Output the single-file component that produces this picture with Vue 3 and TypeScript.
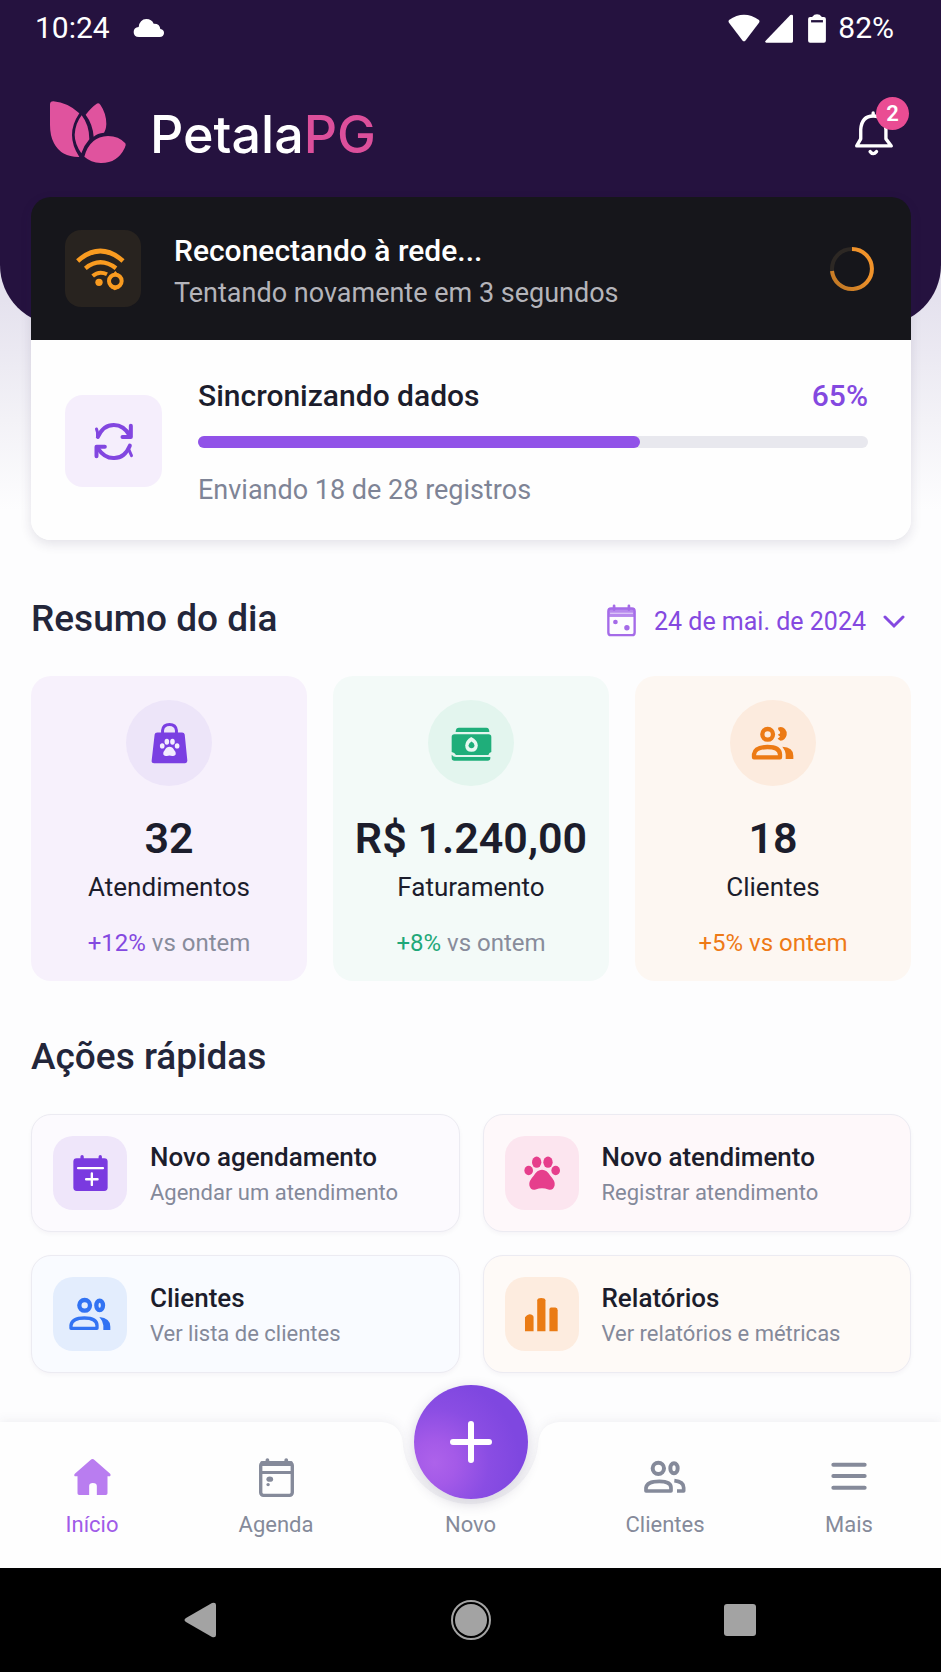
<script setup lang="ts">
interface Stat {
  tone: string
  icon: string
  value: string
  label: string
  delta: string
}

interface QuickAction {
  tone: string
  icon: string
  title: string
  text: string
}

interface Tab {
  icon: string
  label: string
  active?: boolean
}

const sent = 18
const total = 28
const progress = 65
const barStyle = { width: '66%' }

const stats: Stat[] = [
  { tone: 'violet', icon: 'bag', value: '32', label: 'Atendimentos', delta: '+12%' },
  { tone: 'green', icon: 'money', value: 'R$ 1.240,00', label: 'Faturamento', delta: '+8%' },
  { tone: 'orange', icon: 'people-bold', value: '18', label: 'Clientes', delta: '+5%' },
]

const actions: QuickAction[] = [
  { tone: 'violet', icon: 'calendar-plus', title: 'Novo agendamento', text: 'Agendar um atendimento' },
  { tone: 'pink', icon: 'paw', title: 'Novo atendimento', text: 'Registrar atendimento' },
  { tone: 'blue', icon: 'people', title: 'Clientes', text: 'Ver lista de clientes' },
  { tone: 'orange', icon: 'bars', title: 'Relatórios', text: 'Ver relatórios e métricas' },
]

const tabsLeft: Tab[] = [
  { icon: 'home', label: 'Início', active: true },
  { icon: 'agenda', label: 'Agenda' },
]

const tabsRight: Tab[] = [
  { icon: 'people-thin', label: 'Clientes' },
  { icon: 'menu', label: 'Mais' },
]
</script>

<template>
  <div class="app">
    <svg class="sprite" aria-hidden="true">
      <symbol id="i-bag" viewBox="0 0 118 132">
        <path d="M38 36V28Q40 10 59 10Q78 10 80 28V36" fill="none" stroke="currentColor" stroke-width="9" />
        <path d="M14 40Q15 34 22 34H97Q104 34 105 40L113 120Q113 127 106 127H12Q4 127 5 120Z" fill="currentColor" />
        <g fill="#f3edff">
          <ellipse cx="37" cy="75" rx="7" ry="8" />
          <ellipse cx="51" cy="62" rx="7" ry="9" />
          <ellipse cx="68" cy="62" rx="7" ry="9" />
          <ellipse cx="82" cy="75" rx="7" ry="8" />
          <path d="M59 77Q68 77 73 87Q80 94 78 100Q75 107 67 105Q59 103 51 105Q43 107 40 100Q38 94 45 87Q50 77 59 77Z" />
        </g>
      </symbol>
      <symbol id="i-money" viewBox="0 0 130 112">
        <path d="M17 21Q17 8 27 8H110Q119 8 119 21Z" fill="currentColor" />
        <path d="M5 36Q5 28 13 28H117Q125 28 125 36V82Q118 84 116 91H18Q14 84 5 82Z" fill="currentColor" />
        <path d="M5 90Q10 97 18 97H122V101Q122 108 114 108H13Q5 108 5 100Z" fill="currentColor" />
        <path d="M64 36Q84 46 84 62Q83 81 65 81Q46 81 46 62Q47 46 64 36Z" fill="#e9f8f1" />
        <path d="M65 50Q74 54 74 62Q73 70 65 70Q57 70 56 62Q57 54 65 50Z" fill="currentColor" />
      </symbol>
      <symbol id="i-people-bold" viewBox="0 0 132 108">
        <circle cx="50" cy="28" r="16" fill="none" stroke="currentColor" stroke-width="13" />
        <path d="M81 8Q93 2 102 12Q109 20 107 30Q103 46 89 47Q82 46 80 40Q85 40 87 34Q82 34 81 28Q89 26 87 20Q81 18 81 8Z" fill="currentColor" />
        <path d="M9 97V88Q12 66 49 66Q86 66 87 88V97Z" fill="none" stroke="currentColor" stroke-width="13" stroke-linejoin="round" />
        <path d="M94 65Q127 66 127 92V102H104V88Q103 76 94 65Z" fill="currentColor" />
      </symbol>
      <symbol id="i-people" viewBox="0 0 132 108">
        <circle cx="50" cy="28" r="16" fill="none" stroke="currentColor" stroke-width="13" />
        <ellipse cx="95" cy="28" rx="10" ry="14" fill="none" stroke="currentColor" stroke-width="13" />
        <path d="M9 97V88Q12 66 49 66Q86 66 87 88V97Z" fill="none" stroke="currentColor" stroke-width="10" stroke-linejoin="round" />
        <path d="M94 63Q127 66 127 92V102H106V88Q104 74 94 63Z" fill="currentColor" />
      </symbol>
      <symbol id="i-people-thin" viewBox="0 0 132 108">
        <circle cx="46" cy="28" r="17" fill="none" stroke="currentColor" stroke-width="12" />
        <ellipse cx="93" cy="28" rx="11" ry="15" fill="none" stroke="currentColor" stroke-width="12" />
        <path d="M9 96V86Q12 67 49 67Q84 67 84 86V96Z" fill="none" stroke="currentColor" stroke-width="11" stroke-linejoin="round" />
        <path d="M94 65Q122 68 122 86V96H102" fill="none" stroke="currentColor" stroke-width="11" stroke-linejoin="round" />
      </symbol>
      <symbol id="i-calendar" viewBox="0 0 92 100">
        <rect x="7" y="13" width="78" height="79" rx="8" fill="none" stroke="currentColor" stroke-width="7" />
        <path d="M7 12H85V38H7Z" fill="currentColor" opacity=".8" />
        <path d="M12 27H80" stroke="#e6d6fb" stroke-width="3" />
        <path d="M24 5V16M68 5V16" stroke="currentColor" stroke-width="8" stroke-linecap="round" />
        <circle cx="28" cy="53" r="7" fill="currentColor" />
        <circle cx="62" cy="70" r="8" fill="currentColor" />
      </symbol>
      <symbol id="i-calendar-plus" viewBox="0 0 110 116">
        <rect x="4" y="13" width="102" height="97" rx="10" fill="currentColor" />
        <path d="M30 8V18M84 8V18" stroke="currentColor" stroke-width="10" stroke-linecap="round" />
        <path d="M18 42H92" stroke="#fff" stroke-width="7" stroke-linecap="round" />
        <path d="M42 75H76M59 58V92" stroke="#fff" stroke-width="7" stroke-linecap="round" />
      </symbol>
      <symbol id="i-paw" viewBox="0 0 114 110">
        <g fill="currentColor">
          <ellipse cx="17" cy="46" rx="13" ry="14" />
          <ellipse cx="41" cy="21" rx="14" ry="17" />
          <ellipse cx="75" cy="21" rx="14" ry="17" />
          <ellipse cx="98" cy="46" rx="13" ry="14" />
          <path d="M57 44Q72 44 82 62Q97 78 95 90Q91 107 76 103Q57 96 38 103Q23 107 19 90Q17 78 32 62Q42 44 57 44Z" />
        </g>
      </symbol>
      <symbol id="i-bars" viewBox="0 0 106 110">
        <g fill="currentColor">
          <path d="M3 63Q9 55 16 54Q29 55 29 63V106H3Z" />
          <path d="M40 12Q41 5 52 5Q64 5 65 12V106H40Z" />
          <path d="M77 40Q77 34 82 34H95Q102 35 102 42V106H77Z" />
        </g>
      </symbol>
      <symbol id="i-home" viewBox="0 0 116 114">
        <path d="M52 6Q58 0 64 6L111 47Q115 54 107 55H103V106Q103 111 98 111H71V84Q71 75 59 75Q48 75 48 84V111H18Q13 111 13 106V55H8Q0 54 5 47Z" fill="currentColor" />
      </symbol>
      <symbol id="i-agenda" viewBox="0 0 110 122">
        <rect x="8" y="17" width="94" height="97" rx="8" fill="none" stroke="currentColor" stroke-width="10" />
        <path d="M8 20H102" stroke="currentColor" stroke-width="14" />
        <path d="M8 46H102" stroke="currentColor" stroke-width="9" />
        <path d="M28 9V18M84 9V18" stroke="currentColor" stroke-width="11" stroke-linecap="round" />
        <ellipse cx="35" cy="66" rx="10" ry="8" fill="currentColor" />
        <circle cx="30" cy="82" r="5" fill="currentColor" />
      </symbol>
      <symbol id="i-menu" viewBox="0 0 108 90">
        <path d="M7 8H101M7 42H101M7 77H101" stroke="currentColor" stroke-width="12" stroke-linecap="round" />
      </symbol>
    </svg>

    <div class="hero">
      <header class="header">
        <div class="status">
          <span class="clock">10:24</span>
          <svg class="cloud" viewBox="0 0 96 60" aria-hidden="true">
            <path d="M18 57Q2 57 2 42Q2 28 17 27Q20 4 40 3Q56 3 62 17Q80 16 82 33Q94 35 93 46Q92 57 80 57Z" fill="#fff" />
          </svg>
          <svg class="wifi" viewBox="0 0 96 84" aria-hidden="true">
            <path d="M3 18Q48 -14 93 18Q96 22 93 26L52 80Q48 84 44 80L3 26Q0 22 3 18Z" fill="#fff" />
          </svg>
          <svg class="signal" viewBox="0 0 84 87" aria-hidden="true">
            <path d="M76 3Q84 0 84 6V82Q84 86 80 86H4Q-2 85 2 80Z" fill="#fff" />
          </svg>
          <svg class="battery" viewBox="0 0 54 88" aria-hidden="true">
            <path d="M12 9L19 2Q27 -1 35 2L42 9H48Q54 9 54 15V81Q54 87 48 87H6Q0 87 0 81V15Q0 9 6 9Z" fill="#fff" />
            <path d="M9 22H45" stroke="#24123f" stroke-width="7" />
          </svg>
          <span class="charge">82%</span>
        </div>
        <div class="brand-row">
          <svg class="logo" viewBox="0 0 240 195" aria-hidden="true">
            <g fill="#e0539e">
              <path d="M6 14Q6 4 16 4Q60 8 94 40Q50 105 94 171Q40 172 18 130Q6 108 6 75Z" />
              <path d="M113 44Q130 22 146 11Q152 8 157 14Q175 40 175 72Q174 90 168 98Q148 100 137 110Q134 72 113 44Z" />
              <path d="M101 46Q124 75 124 118Q108 136 100 160Q80 130 80 104Q82 70 101 46Z" />
              <path d="M109 170Q125 110 180 108Q212 108 232 130Q236 136 230 144Q208 190 158 189Q128 187 109 170Z" />
            </g>
          </svg>
          <span class="wordmark">Petala<b>PG</b></span>
          <button class="bell" type="button" aria-label="Notificações">
            <svg viewBox="0 0 125 140" aria-hidden="true">
              <g fill="none" stroke="#fff" stroke-width="10" stroke-linejoin="round" stroke-linecap="round">
                <path d="M11 107L23 86V58Q26 18 60 18Q94 18 98 58V86L114 107Z" />
                <path d="M60 16V9" />
                <path d="M51 124Q60 136 70 124" />
              </g>
            </svg>
            <span class="badge">2</span>
          </button>
        </div>
      </header>

      <section class="sync-card">
        <div class="offline" role="status">
          <span class="offline-icon">
            <svg viewBox="8 0 150 132" aria-hidden="true">
              <g fill="none" stroke="#f99b20" stroke-width="14">
                <path d="M7 42Q75 -18 143 42" />
                <path d="M30 64Q75 28 122 64" stroke-width="13" />
                <path d="M52 87Q71 70 95 82" stroke-width="12" />
                <circle cx="120" cy="102" r="19" stroke-width="12" />
              </g>
              <path d="M112 82L120 72L129 82ZM104 122L118 130L134 124Z" fill="#f99b20" />
              <circle cx="71" cy="106" r="11" fill="#f99b20" />
            </svg>
          </span>
          <div class="offline-text">
            <strong>Reconectando à rede...</strong>
            <span>Tentando novamente em 3 segundos</span>
          </div>
          <svg class="spinner" viewBox="0 0 46 46" aria-hidden="true">
            <defs>
              <linearGradient id="spin" x1="0" y1="1" x2="1" y2="0">
                <stop offset="0" stop-color="#b87324" />
                <stop offset=".6" stop-color="#f0922a" />
              </linearGradient>
            </defs>
            <circle cx="23" cy="23" r="20" fill="none" stroke="#2d2824" stroke-width="4" />
            <path d="M23 3A20 20 0 1 1 3 25" fill="none" stroke="url(#spin)" stroke-width="4" />
          </svg>
        </div>
        <div class="sync">
          <span class="sync-icon">
            <svg viewBox="0 0 125 120" aria-hidden="true">
              <g fill="none" stroke="#8246e0" stroke-width="12" stroke-linecap="round" stroke-linejoin="round">
                <path d="M14 48Q30 12 62 12Q92 12 110 44" />
                <path d="M10 24L13 34V46" stroke-width="9" />
                <path d="M113 14V48H88" />
                <path d="M110 74Q94 112 62 111Q34 112 14 82" />
                <path d="M108 88L115 104" stroke-width="9" />
                <path d="M10 106V77H35" />
              </g>
            </svg>
          </span>
          <div class="sync-body">
            <div class="sync-head">
              <strong>Sincronizando dados</strong>
              <span>{{ progress }}%</span>
            </div>
            <div class="track" role="progressbar" aria-label="Sincronizando dados" :aria-valuenow="progress" aria-valuemin="0" aria-valuemax="100">
              <div class="fill" :style="barStyle"></div>
            </div>
            <p>Enviando {{ sent }} de {{ total }} registros</p>
          </div>
        </div>
      </section>
    </div>

    <main class="main">
      <div class="section-head">
        <h2>Resumo do dia</h2>
        <button class="date" type="button">
          <svg class="date-icon" aria-hidden="true"><use href="#i-calendar" /></svg>
          <span>24 de mai. de 2024</span>
          <svg class="chevron" viewBox="0 0 22 14" aria-hidden="true">
            <path d="M2 2L11 11L20 2" fill="none" stroke="currentColor" stroke-width="3" stroke-linecap="round" />
          </svg>
        </button>
      </div>
      <div class="stats">
        <article v-for="s in stats" :key="s.label" class="stat" :class="s.tone">
          <span class="stat-icon"><svg :class="s.icon" aria-hidden="true"><use :href="`#i-${s.icon}`" /></svg></span>
          <strong>{{ s.value }}</strong>
          <span class="stat-label">{{ s.label }}</span>
          <span class="delta"><em>{{ s.delta }}</em> vs ontem</span>
        </article>
      </div>

      <h2 class="actions-title">Ações rápidas</h2>
      <div class="actions">
        <button v-for="a in actions" :key="a.title" class="action" :class="a.tone" type="button">
          <span class="action-icon"><svg :class="a.icon" aria-hidden="true"><use :href="`#i-${a.icon}`" /></svg></span>
          <span class="action-text">
            <strong>{{ a.title }}</strong>
            <span>{{ a.text }}</span>
          </span>
        </button>
      </div>
    </main>

    <nav class="tabs">
      <div class="tabs-bg">
        <div class="panel"></div>
        <svg width="207" height="146" viewBox="0 0 207 146" aria-hidden="true">
          <path d="M0 0H14Q35 1 36 24A68 66 0 0 0 171 24Q172 1 193 0H207V146H0Z" fill="#fefefe" />
        </svg>
        <div class="panel"></div>
      </div>
      <a v-for="t in tabsLeft" :key="t.label" href="#" class="tab" :class="{ active: t.active }">
        <span class="tab-icon"><svg :class="t.icon" aria-hidden="true"><use :href="`#i-${t.icon}`" /></svg></span>
        <span>{{ t.label }}</span>
      </a>
      <a href="#" class="tab">
        <span class="fab">
          <svg viewBox="0 0 44 44" aria-hidden="true">
            <path d="M22 4V40M4 22H40" stroke="#fff" stroke-width="6" stroke-linecap="round" />
          </svg>
        </span>
        <span>Novo</span>
      </a>
      <a v-for="t in tabsRight" :key="t.label" href="#" class="tab">
        <span class="tab-icon"><svg :class="t.icon" aria-hidden="true"><use :href="`#i-${t.icon}`" /></svg></span>
        <span>{{ t.label }}</span>
      </a>
    </nav>

    <div class="system">
      <button type="button" aria-label="Voltar">
        <svg viewBox="0 0 40 40" aria-hidden="true">
          <path d="M4 18L30 3Q34 2 34 5V35Q34 38 30 37L4 22Q1 20 4 18Z" fill="#a3a3a3" />
        </svg>
      </button>
      <button type="button" aria-label="Tela inicial">
        <svg viewBox="0 0 40 40" aria-hidden="true">
          <circle cx="20" cy="20" r="19" fill="none" stroke="#a3a3a3" stroke-width="2" />
          <circle cx="20" cy="20" r="16" fill="#a3a3a3" />
        </svg>
      </button>
      <button type="button" aria-label="Recentes">
        <svg viewBox="0 0 40 40" aria-hidden="true">
          <rect x="4" y="4" width="32" height="32" rx="3" fill="#a3a3a3" />
        </svg>
      </button>
    </div>
  </div>
</template>

<style>
body {
  margin: 0;
  background: #fdfdfe;
}
</style>

<style scoped>
.app {
  display: flex;
  flex-direction: column;
  min-height: 100vh;
  font-family: Roboto, "Liberation Sans", sans-serif;
  color: #1c1d2c;
  background: #fdfdfe;
}
.app *,
.app {
  box-sizing: border-box;
}
.sprite {
  position: absolute;
  width: 0;
  height: 0;
}
svg {
  display: block;
  flex: none;
}
button {
  padding: 0;
  border: 0;
  background: none;
  font: inherit;
  color: inherit;
  text-align: left;
}
h2,
p {
  margin: 0;
}
h2 {
  font-size: 37px;
  line-height: 44px;
  font-weight: 500;
  color: #23263a;
}
strong {
  font-weight: 500;
}

/* icon sizes */
.bag {
  width: 39px;
  height: 44px;
}
.money {
  width: 43px;
  height: 37px;
}
.people,
.people-bold,
.people-thin {
  width: 44px;
  height: 36px;
}
.calendar-plus {
  width: 37px;
  height: 39px;
}
.paw {
  width: 38px;
  height: 37px;
}
.bars {
  width: 35px;
  height: 37px;
}
.home {
  width: 39px;
  height: 38px;
}
.agenda {
  width: 37px;
  height: 41px;
}
.menu {
  width: 36px;
  height: 30px;
}

/* header */
.hero {
  padding-bottom: 24px;
  background: linear-gradient(#e3dfed 0, #e5e2ee 300px, #f3f2f7 420px, #fdfdfe 510px);
}
.header {
  padding-bottom: 153px;
  border-radius: 0 0 60px 60px;
  background: #25123f;
}
.status {
  display: flex;
  align-items: center;
  height: 56px;
  padding: 0 47px 0 35px;
  font-size: 30px;
  line-height: 36px;
  color: #fff;
}
.cloud {
  width: 32px;
  height: 20px;
  margin: 0 auto 0 23px;
}
.wifi {
  width: 32px;
  height: 28px;
  margin-right: 5px;
}
.signal {
  width: 28px;
  height: 29px;
  margin-right: 15px;
}
.battery {
  width: 18px;
  height: 29px;
  margin-right: 12px;
}
.brand-row {
  display: flex;
  align-items: center;
  height: 80px;
  margin-top: 36px;
  padding: 0 32px 0 48px;
}
.logo {
  width: 80px;
  height: 65px;
}
.wordmark {
  margin: 6px auto 0 22px;
  font-family: Inter, Roboto, sans-serif;
  font-size: 52px;
  line-height: 64px;
  font-weight: 500;
  color: #fff;
}
.wordmark b {
  font-weight: 500;
  color: #dc4f9b;
}
.bell {
  position: relative;
  align-self: flex-start;
  padding: 18px 14px 0 0;
}
.bell svg {
  width: 42px;
  height: 47px;
}
.badge {
  position: absolute;
  top: 5px;
  right: 0;
  width: 33px;
  height: 33px;
  border-radius: 50%;
  background: #ea4c93;
  color: #fff;
  font-size: 22px;
  line-height: 33px;
  font-weight: 600;
  text-align: center;
}

/* connection and sync card */
.sync-card {
  position: relative;
  margin: -128px 30px 0 31px;
  border-radius: 20px;
  box-shadow: 0 4px 12px rgba(40, 30, 70, 0.12);
}
.offline {
  display: flex;
  align-items: center;
  min-height: 143px;
  padding: 0 36px 0 34px;
  border-radius: 20px 20px 0 0;
  background: #16161b;
}
.offline-icon {
  display: grid;
  place-items: center;
  flex: none;
  width: 76px;
  height: 77px;
  border-radius: 16px;
  background: #28231f;
}
.offline-icon svg {
  width: 50px;
  height: 44px;
  overflow: visible;
}
.offline-text {
  display: flex;
  flex-direction: column;
  flex: 1;
  gap: 2px;
  padding-top: 6px;
  margin-left: 33px;
}
.offline-text strong {
  font-size: 30px;
  line-height: 40px;
  color: #fff;
}
.offline-text span {
  font-size: 27px;
  line-height: 40px;
  color: #b4b4ba;
}
.spinner {
  width: 46px;
  height: 46px;
}
.sync {
  display: flex;
  align-items: flex-start;
  padding: 38px 43px 32px 34px;
  border-radius: 0 0 20px 20px;
  background: #fefefe;
}
.sync-icon {
  display: grid;
  place-items: center;
  flex: none;
  width: 97px;
  height: 92px;
  margin-top: 17px;
  border-radius: 18px;
  background: #f5eefc;
}
.sync-icon svg {
  width: 42px;
  height: 40px;
}
.sync-body {
  flex: 1;
  margin-left: 36px;
}
.sync-head {
  display: flex;
  justify-content: space-between;
  font-size: 30px;
  line-height: 36px;
  font-weight: 500;
}
.sync-head span {
  color: #8449e0;
}
.track {
  height: 12px;
  margin: 22px 0 24px;
  border-radius: 6px;
  background: #e8e8ee;
}
.fill {
  height: 100%;
  border-radius: 6px;
  background: #9152e8;
}
.sync p {
  font-size: 27px;
  line-height: 36px;
  color: #7e8496;
}

/* day summary */
.main {
  flex: 1;
  padding: 33px 30px 49px 31px;
}
.section-head {
  display: flex;
  justify-content: space-between;
  align-items: flex-end;
}
.date {
  display: flex;
  align-items: center;
  padding-right: 6px;
  font-size: 25px;
  line-height: 38px;
  color: #8449e0;
}
.date-icon {
  width: 31px;
  height: 34px;
  margin: 0 17px 2px 0;
  color: #a56be8;
}
.chevron {
  width: 22px;
  height: 14px;
  margin-left: 17px;
}
.stats {
  display: grid;
  grid-template-columns: repeat(3, 1fr);
  gap: 26px;
  margin-top: 35px;
}
.stat {
  display: flex;
  flex-direction: column;
  align-items: center;
  padding: 24px 8px 22px;
  border-radius: 20px;
  text-align: center;
}
.stat-icon {
  display: grid;
  place-items: center;
  width: 86px;
  height: 86px;
  border-radius: 50%;
}
.stat strong {
  margin-top: 26px;
  font-size: 43px;
  line-height: 52px;
  font-weight: 600;
  white-space: nowrap;
}
.stat-label {
  margin-top: 7px;
  font-size: 26px;
  line-height: 32px;
}
.delta {
  margin-top: 24px;
  font-size: 24px;
  line-height: 32px;
  color: #888c9b;
}
.delta em {
  font-style: normal;
}
.stat.violet {
  background: #f7f1fc;
}
.stat.violet .stat-icon {
  background: #ede5f9;
  color: #7a3fe2;
}
.stat.violet em {
  color: #8449e0;
}
.stat.green {
  background: #f3faf8;
}
.stat.green .stat-icon {
  background: #e3f5ee;
  color: #1fae7a;
}
.stat.green em {
  color: #1fa878;
}
.stat.orange {
  background: #fdf7f2;
}
.stat.orange .stat-icon {
  background: #fcebde;
  color: #ec7a14;
}
.stat.orange .delta {
  color: #ee7a16;
}

/* quick actions */
.actions-title {
  margin-top: 54px;
}
.actions {
  display: grid;
  grid-template-columns: 1fr 1fr;
  gap: 23px;
  margin-top: 35px;
}
.action {
  display: flex;
  align-items: center;
  padding: 21px;
  border: 1px solid #ecebf2;
  border-radius: 20px;
  box-shadow: 0 2px 4px rgba(40, 30, 70, 0.04);
}
.action-icon {
  display: grid;
  place-items: center;
  flex: none;
  width: 74px;
  height: 74px;
  border-radius: 20px;
}
.action-text {
  display: flex;
  flex-direction: column;
  gap: 5px;
  padding-top: 3px;
  margin-left: 23px;
}
.action-text strong {
  font-size: 26px;
  line-height: 32px;
}
.action-text span {
  font-size: 22px;
  line-height: 30px;
  color: #84899a;
}
.action.violet {
  background: #fcfafe;
}
.action.violet .action-icon {
  background: #efe6fa;
  color: #7a3ae0;
}
.action.pink {
  background: #fef8fa;
}
.action.pink .action-icon {
  background: #fce5ef;
  color: #e63e8c;
}
.action.blue {
  background: #f9fbff;
}
.action.blue .action-icon {
  background: #e3edfd;
  color: #3273f3;
}
.action.orange {
  background: #fefaf7;
}
.action.orange .action-icon {
  background: #fdecdf;
  color: #ea7b14;
}

/* bottom tabs */
.tabs {
  position: relative;
  display: grid;
  grid-template-columns: 1fr 1fr 205px 1fr 1fr;
  height: 146px;
  padding-top: 35px;
}
.tabs-bg {
  position: absolute;
  inset: 0;
  display: flex;
  filter: drop-shadow(0 -2px 5px rgba(30, 30, 60, 0.06));
}
.tabs-bg svg {
  margin: 0 -1px;
}
.panel {
  flex: 1;
  background: #fefefe;
}
.tab {
  position: relative;
  display: flex;
  flex-direction: column;
  align-items: center;
  justify-content: flex-start;
  font-size: 22px;
  line-height: 28px;
  color: #858a9a;
  text-decoration: none;
}
.tab-icon {
  display: grid;
  place-items: center;
  height: 40px;
  margin-bottom: 14px;
}
.tab.active {
  color: #a05be8;
}
.tab.active .tab-icon {
  color: #b97df0;
}
.fab {
  display: grid;
  place-items: center;
  width: 114px;
  height: 114px;
  margin: -72px 0 12px;
  border-radius: 50%;
  background: radial-gradient(circle at 18% 68%, #ad62ea 0, #a45ae8 18%, #8a4de3 45%, #7f47e0 70%);
  box-shadow: 0 4px 14px rgba(60, 50, 90, 0.2);
}
.fab svg {
  width: 44px;
  height: 44px;
}

/* system navigation */
.system {
  display: flex;
  justify-content: space-around;
  align-items: center;
  height: 104px;
  padding: 0 67px;
  background: #000;
}
.system svg {
  width: 40px;
  height: 40px;
}
</style>
